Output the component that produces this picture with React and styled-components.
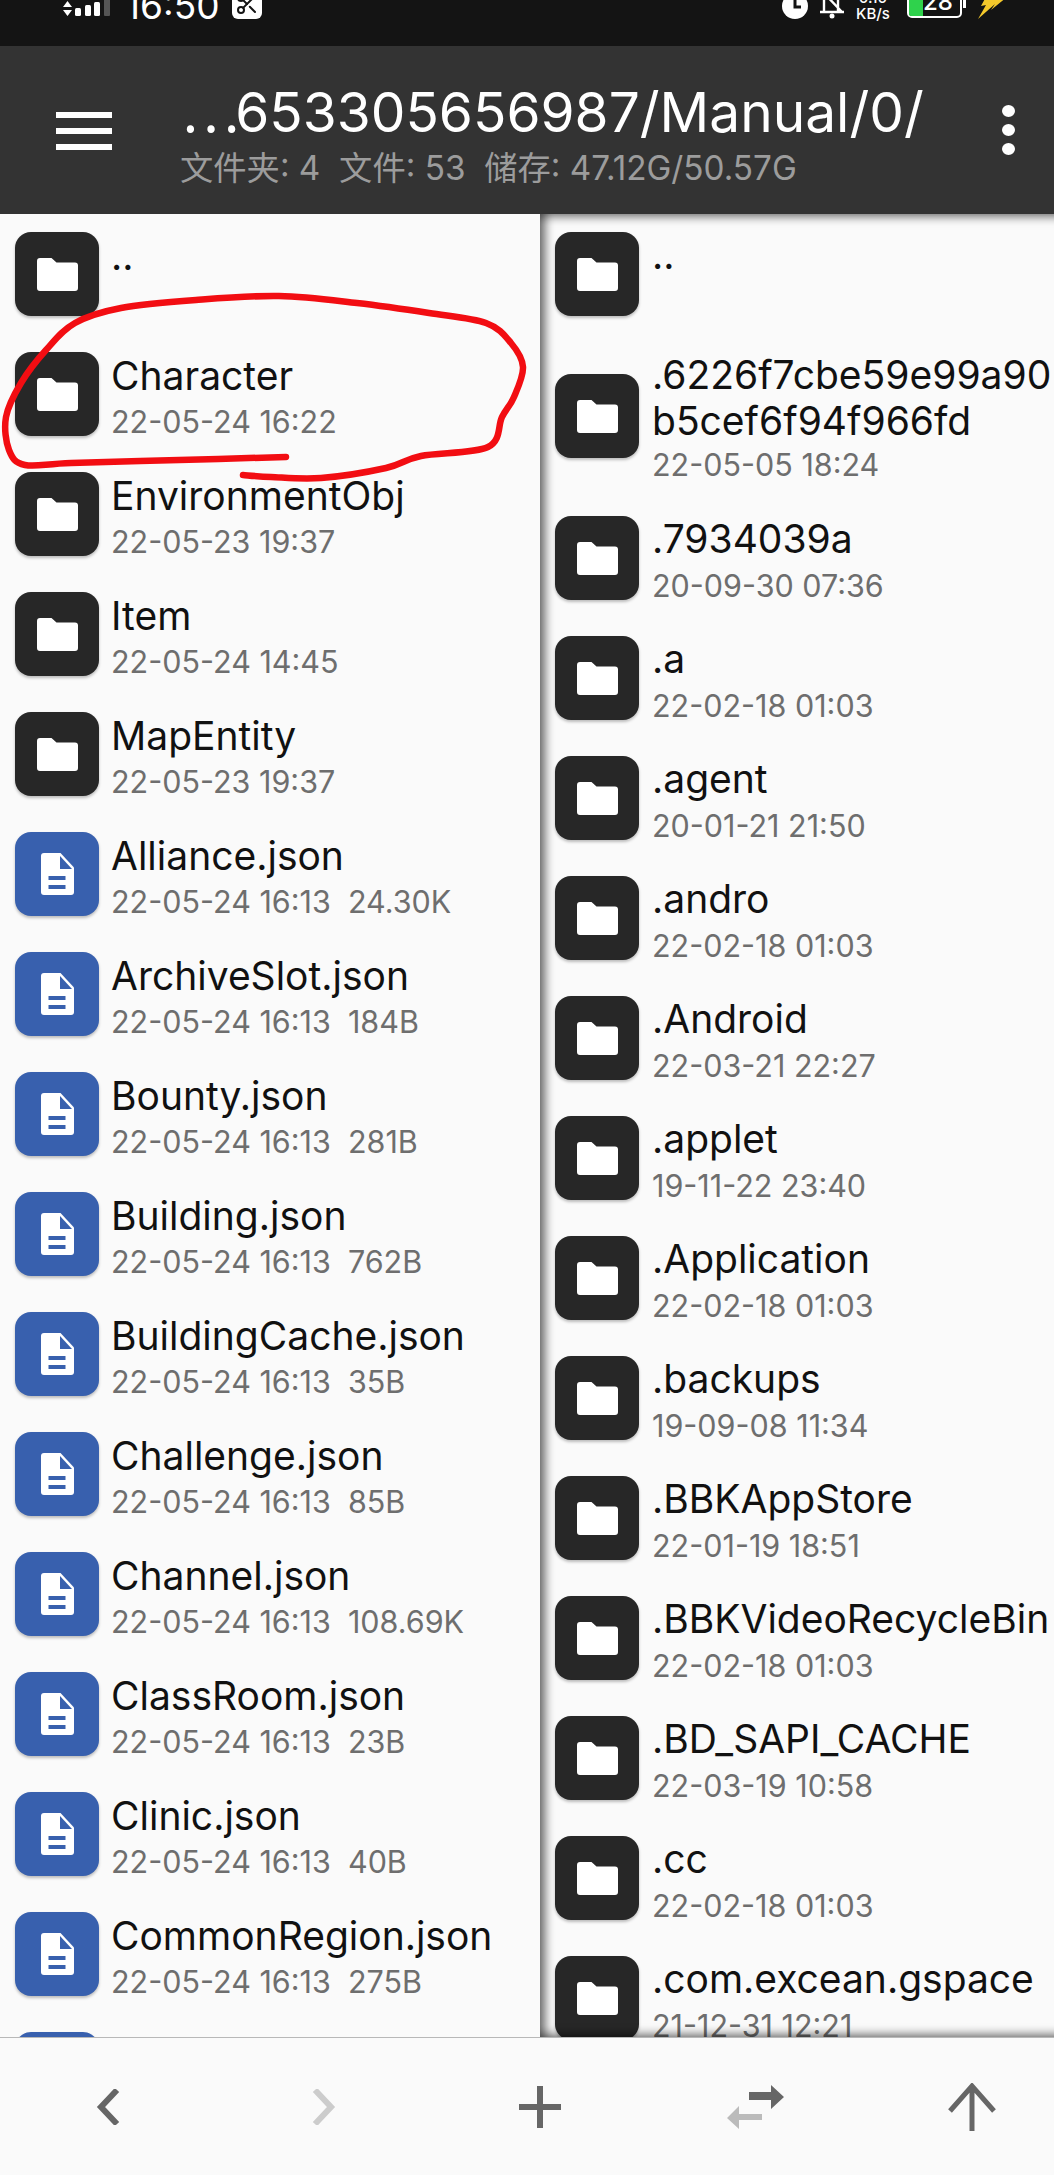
import React from 'react';
import styled, { createGlobalStyle } from 'styled-components';
import { Scissors } from 'lucide-react';

const GlobalStyle = createGlobalStyle`
  html, body {
    margin: 0;
    padding: 0;
    background: #fafafa;
    font-family: Inter, "Noto Sans CJK SC", sans-serif;
  }
`;

const Screen = styled.div`
  position: relative;
  width: 1054px;
  height: 2175px;
  display: flex;
  flex-direction: column;
  overflow: hidden;
`;

const StatusBar = styled.div`
  flex: 0 0 46px;
  box-sizing: border-box;
  padding: 0 47px 27px 63px;
  display: flex;
  align-items: flex-end;
  justify-content: space-between;
  background: #141414;
  color: #fff;
  overflow: hidden;
`;

const StatusGroup = styled.div`
  display: flex;
  align-items: flex-end;
  gap: ${p => p.$gap}px;
  height: 0;
`;

const Time = styled.span`
  font-size: 37px;
  line-height: 37px;
  font-weight: 400;
  margin-bottom: -5px;
`;

const CutBox = styled.div`
  width: 30px;
  height: 30px;
  margin-left: -3px;
  border-radius: 6px;
  background: #fff;
  color: #141414;
  display: flex;
  align-items: center;
  justify-content: center;
`;

const Speed = styled.div`
  width: 34px;
  font-size: 15px;
  line-height: 16px;
  font-weight: 500;
  text-align: center;
  margin-bottom: -3px;
  margin-right: 6px;
`;

const Battery = styled.div`
  position: relative;
  box-sizing: border-box;
  width: 55px;
  height: 30px;
  margin-bottom: 1px;
  margin-right: 5px;
  border: 2px solid #fff;
  border-radius: 5px;

  &::after {
    content: '';
    position: absolute;
    left: calc(100% + 3px);
    bottom: 8px;
    width: 3px;
    height: 10px;
    background: #fff;
  }
`;

const BatteryFill = styled.div`
  width: 14px;
  height: 100%;
  border-radius: 2px 0 0 2px;
  background: #2fd24c;
`;

const BatteryLabel = styled.span`
  position: absolute;
  left: 14px;
  bottom: 1px;
  font-size: 24px;
  line-height: 26px;
  font-weight: 500;
`;

const Toolbar = styled.header`
  flex: 0 0 168px;
  box-sizing: border-box;
  padding: 0 39px 0 56px;
  display: flex;
  align-items: center;
  background: #333333;
`;

const MenuButton = styled.div`
  width: 56px;
  height: 38px;
  display: flex;
  flex-direction: column;
  justify-content: space-between;
  margin-right: 69px;
  margin-top: 2px;
`;

const MenuBar = styled.span`
  height: 6px;
  background: #fff;
`;

const Heading = styled.div`
  flex: 1;
  min-width: 0;
  margin-top: 12px;
`;

const Path = styled.div`
  font-size: 55px;
  line-height: 60px;
  color: #fff;
  white-space: nowrap;
`;

const Ellipsis = styled.span`
  margin-right: -4px;
`;

const Summary = styled.div`
  font-size: 33.3px;
  line-height: 44px;
  margin-top: 4px;
  color: #9c9c9c;
  white-space: pre;
  margin-left: -1px;
`;

const MoreButton = styled.div`
  width: 14px;
  height: 50px;
  display: flex;
  flex-direction: column;
  justify-content: space-between;
  align-items: center;
`;

const MoreDot = styled.span`
  width: 13px;
  height: 12px;
  border-radius: 50%;
  background: #fff;
`;

const Panels = styled.main`
  flex: 1;
  min-height: 0;
  display: flex;
`;

const RowText = styled.div`
  align-self: flex-start;
  margin-left: 13px;
  padding-top: 18px;
  white-space: pre;
`;

const Meta = styled.div`
  font-size: 30.5px;
  line-height: 42px;
  margin-top: ${p => (p.$tall ? 0 : 3)}px;
  color: #6e6e6e;
  white-space: pre;
`;

const Panel = styled.section`
  flex: ${p => (p.$shaded ? '1' : '0 0 540px')};
  position: relative;
  min-width: 0;
  overflow: hidden;
  background: #fafafa;

  ${p => !p.$shaded && `
    ${RowText} {
      margin-left: 12px;
      padding-top: 19px;
    }
    ${Meta} {
      margin-top: 2px;
    }
  `}

  ${p => p.$shaded && `
    &::after {
      content: '';
      position: absolute;
      inset: 0 -20px 0 0;
      box-shadow: inset 9px 0 9px -3px rgba(0, 0, 0, 0.5), inset 0 9px 9px -5px rgba(0, 0, 0, 0.4), inset 0 -9px 9px -5px rgba(0, 0, 0, 0.4);
      pointer-events: none;
    }
  `}
`;

const Row = styled.div`
  display: flex;
  align-items: center;
  min-height: ${p => (p.$tall ? 164 : 120)}px;
  padding-left: 15px;
`;

const Badge = styled.div`
  flex: 0 0 84px;
  height: 84px;
  border-radius: 16px;
  background: ${p => (p.$file ? '#3860ae' : '#272727')};
  box-shadow: 0 2px 3px rgba(0, 0, 0, 0.25);
  display: flex;
  align-items: center;
  justify-content: center;
`;

const Name = styled.div`
  font-size: 39px;
  line-height: 46px;
  color: #111;
`;

const BottomBar = styled.footer`
  flex: 0 0 138px;
  box-sizing: border-box;
  padding: 0 58px 0 84px;
  display: flex;
  align-items: center;
  justify-content: space-between;
  background: #fafafa;
  border-top: 1px solid #b8b8b8;
`;

const NavButton = styled.div`
  width: 48px;
  display: flex;
  align-items: center;
  justify-content: center;
  overflow: visible;
`;

const Scribble = styled.svg`
  position: absolute;
  left: 0;
  top: 0;
  pointer-events: none;
`;

const FolderIcon = () => (
  <svg width="41" height="33" viewBox="0 0 41 33">
    <path d="M3 0h11.5l5 4.5H38a3 3 0 0 1 3 3V30a3 3 0 0 1-3 3H3a3 3 0 0 1-3-3V3a3 3 0 0 1 3-3z" fill="#fff" />
  </svg>
);

const DocIcon = () => (
  <svg width="33" height="42" viewBox="0 0 33 42">
    <path d="M3 0h16.5L33 14.5V39a3 3 0 0 1-3 3H3a3 3 0 0 1-3-3V3a3 3 0 0 1 3-3z" fill="#fff" />
    <path d="M19 3v13h12z" fill="#3860ae" />
    <rect x="7.5" y="23" width="17" height="4" fill="#3860ae" />
    <rect x="7.5" y="32" width="17" height="4" fill="#3860ae" />
  </svg>
);

const SignalIcon = () => (
  <svg width="47" height="20" viewBox="0 0 47 20" style={{ overflow: 'visible' }}>
    <path d="M0 8 4.5 2 9 8zM0 11h9l-4.5 6z" fill="#fff" />
    <rect x="12" y="9" width="6" height="8" rx="1.5" fill="#fff" />
    <rect x="22" y="6" width="6" height="11" rx="1.5" fill="#fff" />
    <rect x="31" y="3" width="6" height="14" rx="1.5" fill="#fff" />
    <rect x="41" y="0" width="6" height="17" rx="1" fill="#555" />
  </svg>
);

const ClockIcon = () => (
  <svg width="26" height="26" viewBox="0 0 26 26">
    <circle cx="13" cy="13" r="13" fill="#fff" />
    <path d="M13 4v10h6" fill="none" stroke="#141414" strokeWidth="3" />
  </svg>
);

const BellOffIcon = () => (
  <svg width="26" height="30" viewBox="0 0 26 30">
    <path d="M5 22V9c0-3 2-6 5-7M19 10v12M1 23h24M3 2l20 21" fill="none" stroke="#fff" strokeWidth="2.4" />
    <circle cx="13" cy="27" r="2.5" fill="#fff" />
  </svg>
);

const BoltIcon = () => (
  <svg width="29" height="30" viewBox="0 0 29 30">
    <path d="M9 6 25 0 19 10 29 8 13 21 17 15 0 30 8 16 3 17z" fill="#f5c92b" />
  </svg>
);

const ChevronIcon = ({ flip, color }) => (
  <svg width="24" height="36" viewBox="0 0 24 36" style={{ transform: flip ? 'scaleX(-1)' : 'none' }}>
    <path d="M21 1 5 18l16 17" fill="none" stroke={color} strokeWidth="6" />
  </svg>
);

const PlusIcon = () => (
  <svg width="42" height="42" viewBox="0 0 42 42">
    <path d="M21 0v42M0 21h42" fill="none" stroke="#666" strokeWidth="6" />
  </svg>
);

const SwapIcon = () => (
  <svg width="58" height="44" viewBox="0 0 58 44" style={{ flex: 'none' }}>
    <path d="M22 7h22V0l13 12-13 12v-9H22z" fill="#666" />
    <path d="M35 29H12v-8L0 33l12 11v-9h23z" fill="#bbb" />
  </svg>
);

const UpIcon = () => (
  <svg width="48" height="48" viewBox="0 0 48 48">
    <path d="M24 3v45M2 28 24 3l22 25" fill="none" stroke="#666" strokeWidth="5" />
  </svg>
);

// traced from the red marker stroke over the second row
const scribblePoints = [
  [286, 457], [179, 460], [71, 463], [25, 465], [9, 450], [6, 417], [21, 383], [46, 350],
  [75, 323], [121, 308], [196, 300], [279, 296], [357, 303], [429, 313], [486, 323],
  [511, 343], [523, 367], [514, 397], [502, 417], [488, 447], [421, 456], [386, 468],
  [321, 478], [271, 477], [243, 475],
];

const smoothPath = pts => {
  let d = `M${pts[0][0]} ${pts[0][1]}`;
  for (let i = 0; i < pts.length - 1; i++) {
    const p0 = pts[i - 1] || pts[i];
    const p1 = pts[i];
    const p2 = pts[i + 1];
    const p3 = pts[i + 2] || p2;
    const c1x = p1[0] + (p2[0] - p0[0]) / 6;
    const c1y = p1[1] + (p2[1] - p0[1]) / 6;
    const c2x = p2[0] - (p3[0] - p1[0]) / 6;
    const c2y = p2[1] - (p3[1] - p1[1]) / 6;
    d += `C${c1x} ${c1y} ${c2x} ${c2y} ${p2[0]} ${p2[1]}`;
  }
  return d;
};

const leftRows = [
  { name: '..' },
  { name: 'Character', meta: '22-05-24 16:22' },
  { name: 'EnvironmentObj', meta: '22-05-23 19:37' },
  { name: 'Item', meta: '22-05-24 14:45' },
  { name: 'MapEntity', meta: '22-05-23 19:37' },
  { file: true, name: 'Alliance.json', meta: '22-05-24 16:13  24.30K' },
  { file: true, name: 'ArchiveSlot.json', meta: '22-05-24 16:13  184B' },
  { file: true, name: 'Bounty.json', meta: '22-05-24 16:13  281B' },
  { file: true, name: 'Building.json', meta: '22-05-24 16:13  762B' },
  { file: true, name: 'BuildingCache.json', meta: '22-05-24 16:13  35B' },
  { file: true, name: 'Challenge.json', meta: '22-05-24 16:13  85B' },
  { file: true, name: 'Channel.json', meta: '22-05-24 16:13  108.69K' },
  { file: true, name: 'ClassRoom.json', meta: '22-05-24 16:13  23B' },
  { file: true, name: 'Clinic.json', meta: '22-05-24 16:13  40B' },
  { file: true, name: 'CommonRegion.json', meta: '22-05-24 16:13  275B' },
  { file: true },
];

const rightRows = [
  { name: '..' },
  { name: '.6226f7cbe59e99a90\nb5cef6f94f966fd', meta: '22-05-05 18:24', tall: true },
  { name: '.7934039a', meta: '20-09-30 07:36' },
  { name: '.a', meta: '22-02-18 01:03' },
  { name: '.agent', meta: '20-01-21 21:50' },
  { name: '.andro', meta: '22-02-18 01:03' },
  { name: '.Android', meta: '22-03-21 22:27' },
  { name: '.applet', meta: '19-11-22 23:40' },
  { name: '.Application', meta: '22-02-18 01:03' },
  { name: '.backups', meta: '19-09-08 11:34' },
  { name: '.BBKAppStore', meta: '22-01-19 18:51' },
  { name: '.BBKVideoRecycleBin', meta: '22-02-18 01:03' },
  { name: '.BD_SAPI_CACHE', meta: '22-03-19 10:58' },
  { name: '.cc', meta: '22-02-18 01:03' },
  { name: '.com.excean.gspace', meta: '21-12-31 12:21' },
];

const FileRow = ({ row }) => (
  <Row $tall={row.tall}>
    <Badge $file={row.file}>{row.file ? <DocIcon /> : <FolderIcon />}</Badge>
    <RowText>
      {row.name && <Name>{row.name}</Name>}
      {row.meta && <Meta $tall={row.tall}>{row.meta}</Meta>}
    </RowText>
  </Row>
);

const App = () => {
  return (
    <Screen>
      <GlobalStyle />
      <StatusBar>
        <StatusGroup $gap={15}>
          <SignalIcon />
          <Time>16:50</Time>
          <CutBox><Scissors size={24} strokeWidth={2} /></CutBox>
        </StatusGroup>
        <StatusGroup $gap={11}>
          <ClockIcon />
          <BellOffIcon />
          <Speed>0.10<br />KB/s</Speed>
          <Battery>
            <BatteryFill />
            <BatteryLabel>28</BatteryLabel>
          </Battery>
          <BoltIcon />
        </StatusGroup>
      </StatusBar>
      <Toolbar>
        <MenuButton>
          <MenuBar /><MenuBar /><MenuBar />
        </MenuButton>
        <Heading>
          <Path><Ellipsis>⋯</Ellipsis>653305656987/Manual/0/</Path>
          <Summary>文件夹: 4  文件: 53  储存: 47.12G/50.57G</Summary>
        </Heading>
        <MoreButton>
          <MoreDot /><MoreDot /><MoreDot />
        </MoreButton>
      </Toolbar>
      <Panels>
        <Panel>
          {leftRows.map((row, i) => <FileRow key={i} row={row} />)}
        </Panel>
        <Panel $shaded>
          {rightRows.map((row, i) => <FileRow key={i} row={row} />)}
        </Panel>
      </Panels>
      <BottomBar>
        <NavButton><ChevronIcon color="#666" /></NavButton>
        <NavButton><ChevronIcon flip color="#ccc" /></NavButton>
        <NavButton><PlusIcon /></NavButton>
        <NavButton><SwapIcon /></NavButton>
        <NavButton><UpIcon /></NavButton>
      </BottomBar>
      <Scribble width="1054" height="2175" viewBox="0 0 1054 2175">
        <path d={smoothPath(scribblePoints)} fill="none" stroke="#f20d12" strokeWidth="6.5" strokeLinecap="round" strokeLinejoin="round" />
      </Scribble>
    </Screen>
  );
};

export default App;
